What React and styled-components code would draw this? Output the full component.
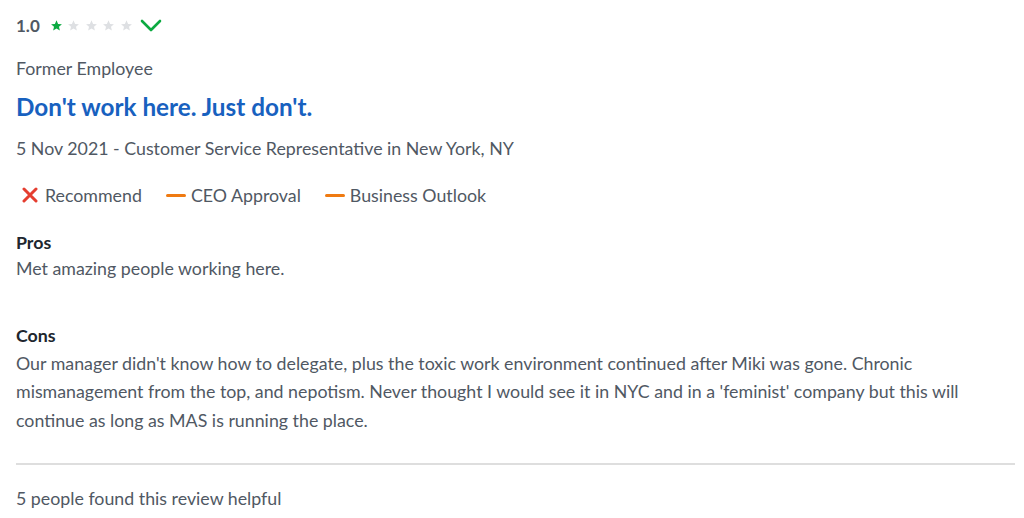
import React from "react";
import styled, { createGlobalStyle } from "styled-components";

const Global = createGlobalStyle`
  html, body { margin: 0; padding: 0; background: #fff; }
  body { font-family: Lato, "Noto Sans", sans-serif; color: #505863; }
`;

const Card = styled.div`
  width: 1024px;
  height: 518px;
  box-sizing: border-box;
  padding: 13px 9px 0 16px;
  overflow: hidden;
`;

const RatingRow = styled.div`
  display: flex;
  align-items: center;
  height: 24px;
`;

const Score = styled.span`
  font-size: 17px;
  font-weight: 700;
  color: #505863;
  margin-right: 10px;
`;

const Stars = styled.span`
  display: flex;
  gap: 4.5px;
  margin-right: 7px;
`;

const Star = styled.svg`
  width: 13px;
  height: 13px;
  fill: ${(p) => (p.$on ? "#0caa41" : "#dee0e3")};
`;

const Check = styled.svg`
  width: 22px;
  height: 16px;
`;

const Status = styled.div`
  font-size: 17.8px;
  margin-top: 19px;
  line-height: 24px;
`;

const Title = styled.h2`
  margin: 12px 0 0;
  font-size: 24.3px;
  line-height: 30px;
  font-weight: 700;
  color: #1861bf;
`;

const Meta = styled.div`
  margin-top: 14px;
  font-size: 17.8px;
  line-height: 24px;
`;

const Badges = styled.div`
  display: flex;
  gap: 24px;
  margin-top: 23px;
  font-size: 17.8px;
  line-height: 24px;
`;

const Badge = styled.span`
  display: flex;
  align-items: center;
  gap: 5px;
`;

const Dash = styled.span`
  display: inline-block;
  width: 20px;
  height: 3px;
  border-radius: 2px;
  background: #ef7a11;
`;

const Section = styled.div`
  margin-top: ${(p) => p.$top}px;
`;

const Label = styled.div`
  font-size: 17.8px;
  font-weight: 700;
  color: #20262e;
  line-height: 24px;
`;

const Body = styled.p`
  margin: ${(p) => p.$gap}px 0 0;
  font-size: 17.8px;
  line-height: 28.5px;
  max-width: 960px;
`;

const Divider = styled.hr`
  margin: 29px 0 0;
  border: none;
  height: 2px;
  background: #dedede;
  width: 999px;
`;

const Helpful = styled.div`
  margin-top: 21px;
  font-size: 17.8px;
  line-height: 24px;
`;

const starPath =
  "M12 2.5l2.9 6.6 7.1.6-5.4 4.7 1.6 7-6.2-3.7-6.2 3.7 1.6-7L2 9.7l7.1-.6z";

export default function App() {
  return (
    <>
      <Global />
      <Card>
        <RatingRow>
          <Score>1.0</Score>
          <Stars>
            {[1, 2, 3, 4, 5].map((i) => (
              <Star key={i} viewBox="0 0 24 24" $on={i === 1}>
                <path d={starPath} />
              </Star>
            ))}
          </Stars>
          <Check viewBox="0 0 22 16">
            <path d="M2 4l9 9 9-9" fill="none" stroke="#0caa41" strokeWidth="2.6" strokeLinecap="round" strokeLinejoin="round" />
          </Check>
        </RatingRow>
        <Status>Former Employee</Status>
        <Title>Don't work here. Just don't.</Title>
        <Meta>5 Nov 2021 - Customer Service Representative in New York, NY</Meta>
        <Badges>
          <Badge>
            <svg width="24" height="16" viewBox="0 0 24 16">
              <path d="M8 2l12 12M20 2L8 14" stroke="#e53e30" strokeWidth="3" strokeLinecap="round" />
            </svg>
            Recommend
          </Badge>
          <Badge>
            <Dash />
            CEO Approval
          </Badge>
          <Badge>
            <Dash />
            Business Outlook
          </Badge>
        </Badges>
        <Section $top={23}>
          <Label>Pros</Label>
          <Body $gap={0}>Met amazing people working here.</Body>
        </Section>
        <Section $top={40}>
          <Label>Cons</Label>
          <Body $gap={2}>
            Our manager didn't know how to delegate, plus the toxic work environment continued after Miki was gone. Chronic mismanagement from the top, and nepotism. Never thought I would see it in NYC and in a 'feminist' company but this will continue as long as MAS is running the place.
          </Body>
        </Section>
        <Divider />
        <Helpful>5 people found this review helpful</Helpful>
      </Card>
    </>
  );
}
